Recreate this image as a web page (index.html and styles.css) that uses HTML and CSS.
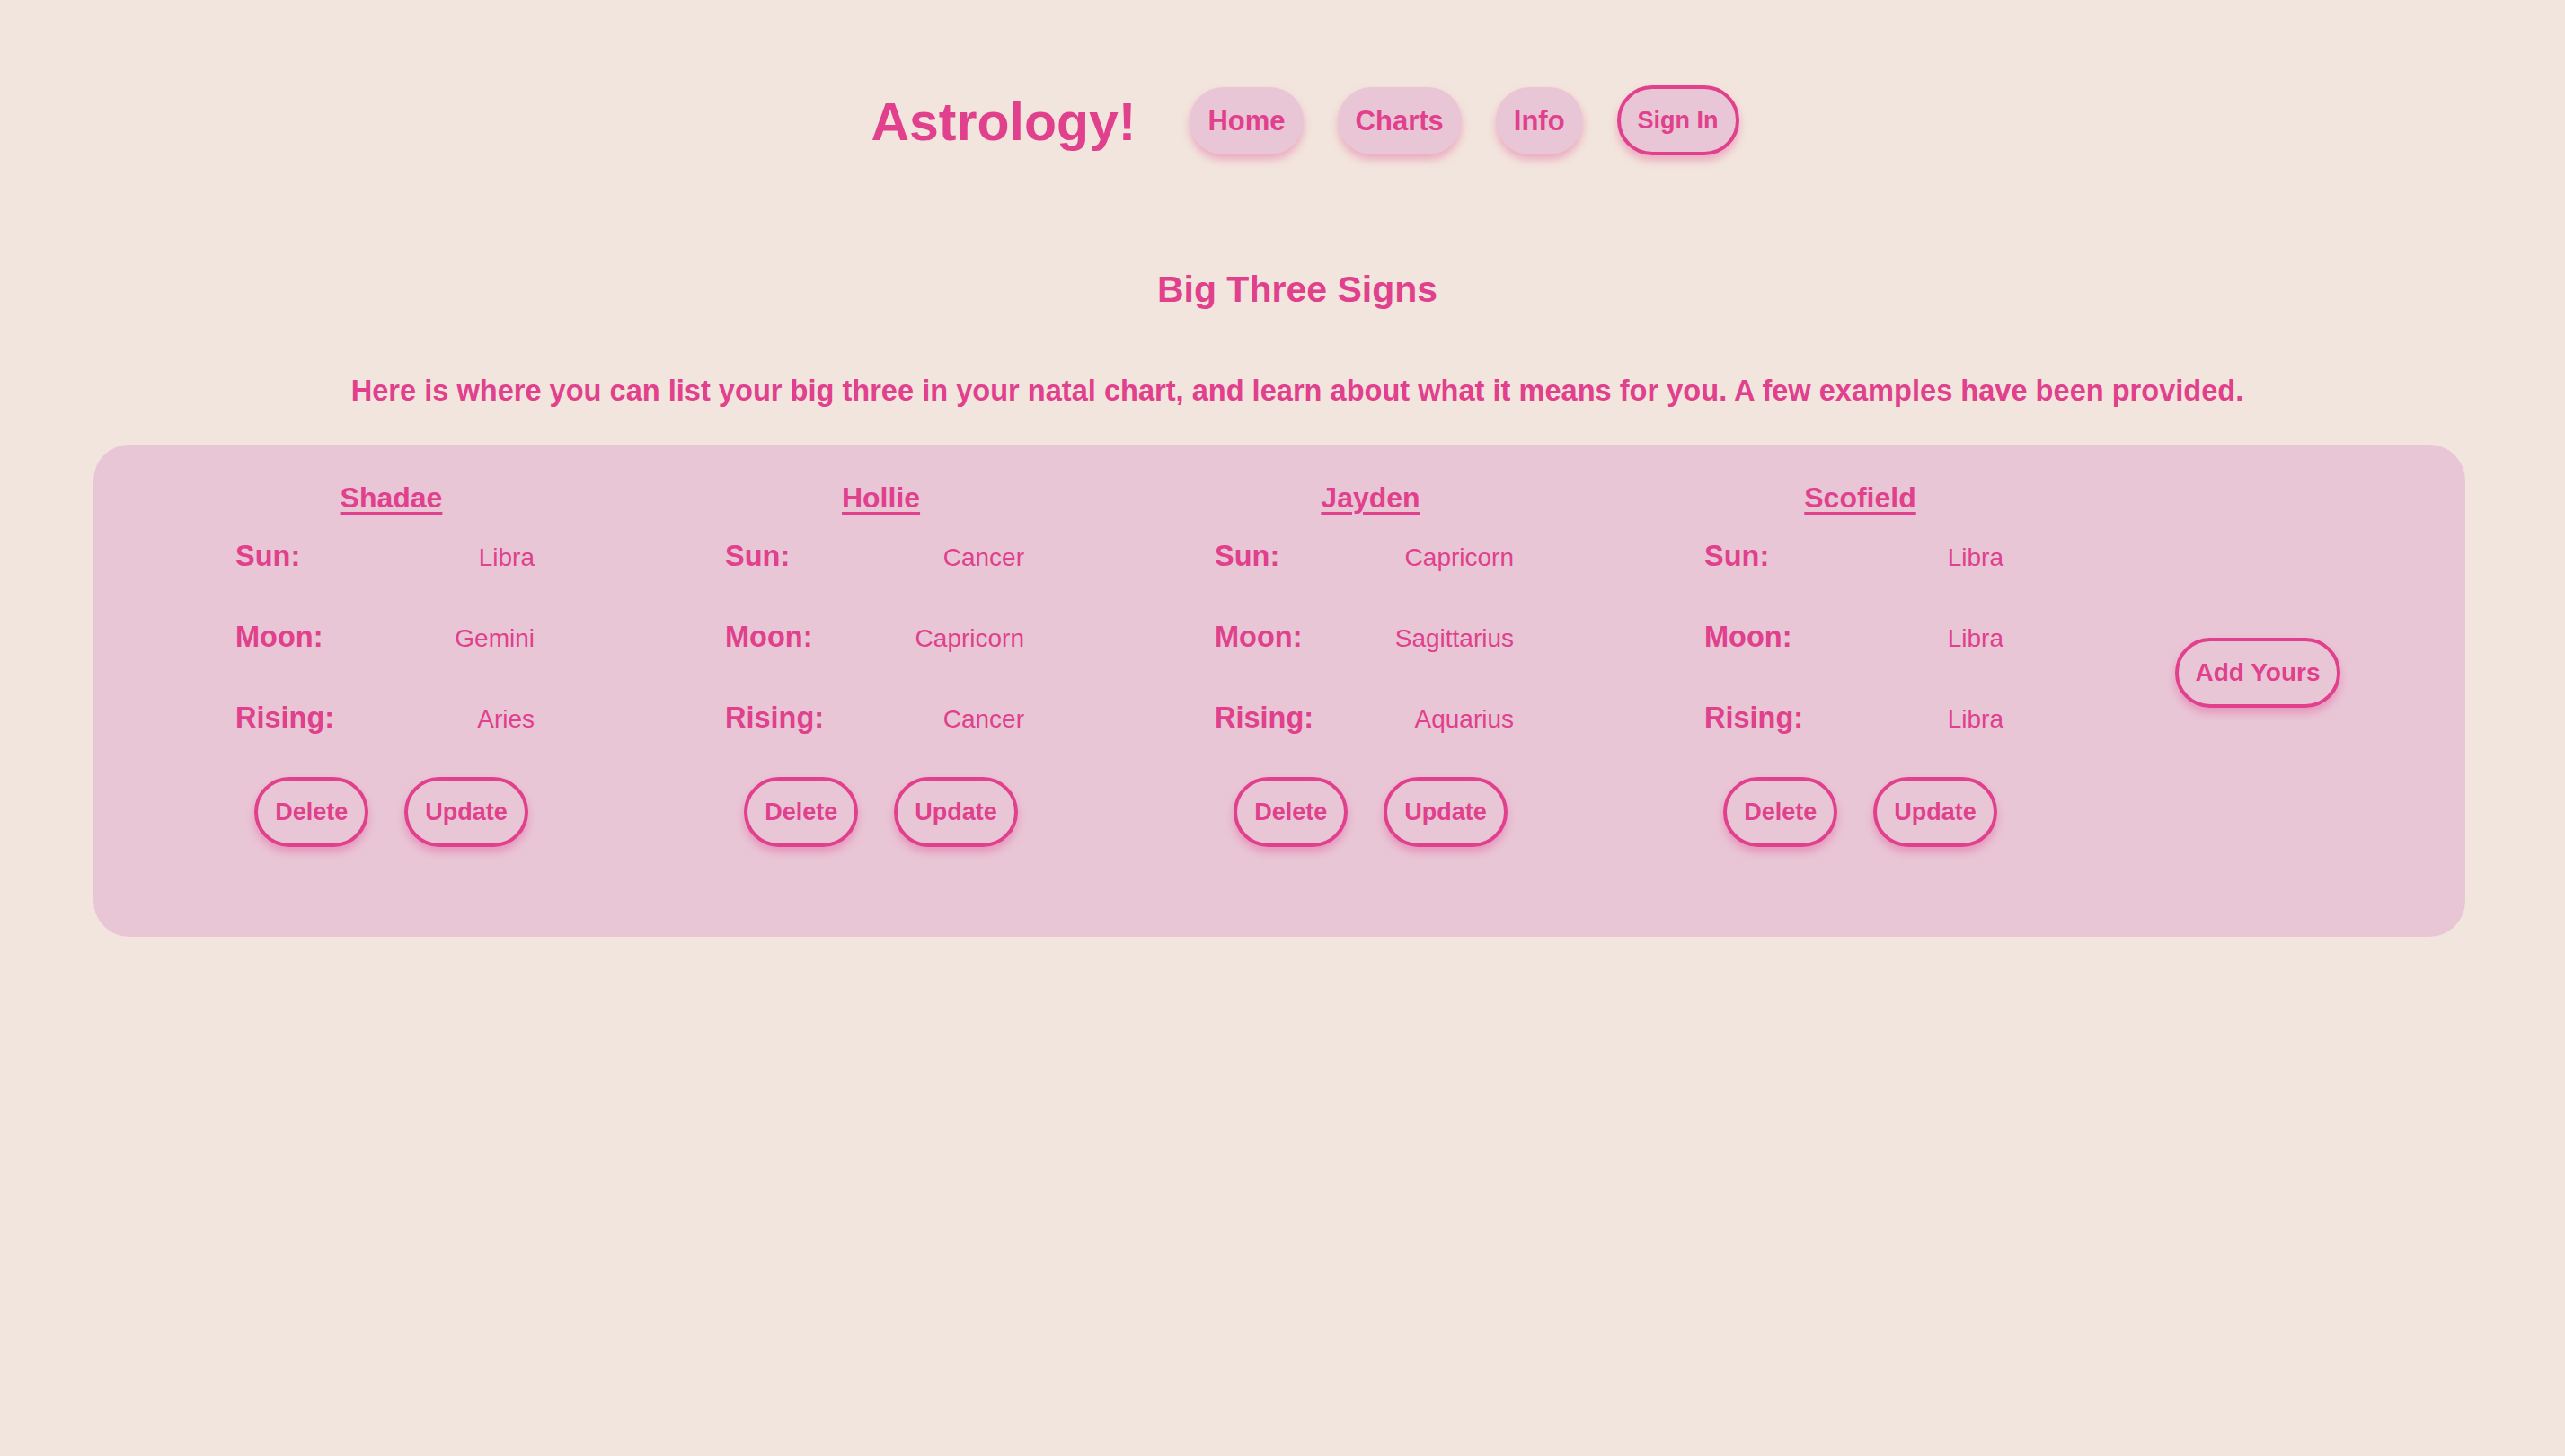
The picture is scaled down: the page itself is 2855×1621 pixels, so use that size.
FILE: index.html
```html
<!DOCTYPE html>
<html lang="en">
<head>
<meta charset="utf-8">
<title>Astrology!</title>
<link rel="stylesheet" href="styles.css">
</head>
<body>
<header class="top">
  <h1 class="logo">Astrology!</h1>
  <nav class="nav">
    <a class="nav-link" href="#">Home</a>
    <a class="nav-link" href="#">Charts</a>
    <a class="nav-link" href="#">Info</a>
    <button class="btn">Sign In</button>
  </nav>
</header>
<main>
  <h2 class="title">Big Three Signs</h2>
  <p class="intro">Here is where you can list your big three in your natal chart, and learn about what it means for you. A few examples have been provided.</p>
  <section class="panel">
    <div class="card">
      <h3 class="name">Shadae</h3>
      <div class="rows">
        <div class="row"><span class="label">Sun:</span><span class="value">Libra</span></div>
        <div class="row"><span class="label">Moon:</span><span class="value">Gemini</span></div>
        <div class="row"><span class="label">Rising:</span><span class="value">Aries</span></div>
      </div>
      <div class="actions"><button class="btn">Delete</button><button class="btn">Update</button></div>
    </div>
    <div class="card">
      <h3 class="name">Hollie</h3>
      <div class="rows">
        <div class="row"><span class="label">Sun:</span><span class="value">Cancer</span></div>
        <div class="row"><span class="label">Moon:</span><span class="value">Capricorn</span></div>
        <div class="row"><span class="label">Rising:</span><span class="value">Cancer</span></div>
      </div>
      <div class="actions"><button class="btn">Delete</button><button class="btn">Update</button></div>
    </div>
    <div class="card">
      <h3 class="name">Jayden</h3>
      <div class="rows">
        <div class="row"><span class="label">Sun:</span><span class="value">Capricorn</span></div>
        <div class="row"><span class="label">Moon:</span><span class="value">Sagittarius</span></div>
        <div class="row"><span class="label">Rising:</span><span class="value">Aquarius</span></div>
      </div>
      <div class="actions"><button class="btn">Delete</button><button class="btn">Update</button></div>
    </div>
    <div class="card">
      <h3 class="name">Scofield</h3>
      <div class="rows">
        <div class="row"><span class="label">Sun:</span><span class="value">Libra</span></div>
        <div class="row"><span class="label">Moon:</span><span class="value">Libra</span></div>
        <div class="row"><span class="label">Rising:</span><span class="value">Libra</span></div>
      </div>
      <div class="actions"><button class="btn">Delete</button><button class="btn">Update</button></div>
    </div>
    <div class="add">
      <button class="btn">Add Yours</button>
    </div>
  </section>
</main>
</body>
</html>
```
FILE: styles.css
```css
html, body {
  margin: 0;
  padding: 0;
}
body {
  background: #f2e5dd;
  color: #e0408c;
  font-family: "Liberation Sans", Arial, Helvetica, sans-serif;
  min-height: 1621px;
}
.top {
  display: flex;
  justify-content: center;
  align-items: center;
  padding-top: 95px;
  padding-left: 50px;
  height: 78px;
}
.logo {
  margin: 5px 60px 0 0;
  font-size: 59px;
  line-height: 1;
  font-weight: 700;
}
.nav {
  display: flex;
  align-items: center;
  gap: 38px;
}
.nav-link {
  display: block;
  padding: 20px 20px;
  line-height: 35px;
  font-size: 31px;
  font-weight: 700;
  color: #e0408c;
  text-decoration: none;
  background: #e9c6d6;
  border-radius: 40px;
  box-shadow: 0 6px 10px rgba(224, 64, 140, 0.35);
}
.btn {
  font-family: "Liberation Sans", Arial, Helvetica, sans-serif;
  font-size: 27px;
  font-weight: 700;
  line-height: 30px;
  color: #e0408c;
  background: #e9c6d6;
  border: 4px solid #e0408c;
  border-radius: 40px;
  padding: 20px 19px;
  box-shadow: 0 6px 10px rgba(224, 64, 140, 0.35);
  cursor: pointer;
}
.title {
  margin: 126px 0 0;
  padding-left: 33px;
  text-align: center;
  font-size: 41px;
  font-weight: 700;
}
.intro {
  margin: 70px 0 0;
  padding-left: 33px;
  text-align: center;
  font-size: 32.6px;
  font-weight: 700;
}
.panel {
  margin: 41px 0 0 104px;
  width: 2640px;
  box-sizing: border-box;
  background: #e9c6d6;
  border-radius: 40px;
  padding: 41px 61px 100px 59px;
  display: grid;
  grid-template-columns: 545px 545px 545px 545px 340px;
  align-items: center;
}
.card {
  display: flex;
  flex-direction: column;
  align-items: center;
}
.name {
  margin: 0;
  font-size: 32px;
  font-weight: 700;
  text-decoration: underline;
  text-underline-offset: 5px;
  text-decoration-thickness: 3px;
}
.rows {
  align-self: flex-start;
  margin: 28px 0 0 99px;
  width: 333px;
  display: flex;
  flex-direction: column;
  gap: 54px;
}
.row {
  display: flex;
  justify-content: space-between;
  align-items: baseline;
  height: 36px;
}
.label {
  font-size: 32.5px;
  font-weight: 700;
}
.value {
  font-size: 28px;
  font-weight: 400;
}
.actions {
  margin-top: 48px;
  display: flex;
  gap: 40px;
}
.add {
  display: flex;
  justify-content: center;
  padding-top: 18px;
}
.add .btn {
  font-size: 28px;
}
```
